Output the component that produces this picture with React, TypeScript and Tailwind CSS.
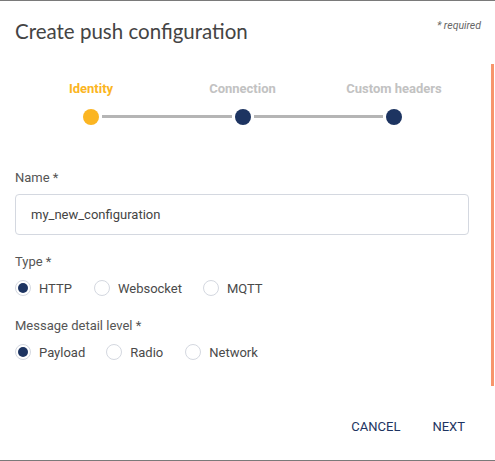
import React from "react"

function Radio({ label, checked }: { label: string; checked?: boolean }) {
  return (
    <label className="flex items-center">
      <span className="flex h-[16px] w-[16px] items-center justify-center rounded-full border border-[#d4d8e0] bg-white">
        {checked && <span className="h-[10px] w-[10px] rounded-full bg-[#1d3461]" />}
      </span>
      <span className="ml-[8px] text-[13px] text-[#4a4a4a]">{label}</span>
    </label>
  )
}

const steps = [
  { label: "Identity", active: true },
  { label: "Connection" },
  { label: "Custom headers" },
]

export default function App() {
  return (
    <div
      className="relative flex h-[461px] w-[495px] flex-col border-y border-[#7a7a7a] bg-white"
      style={{ fontFamily: "Roboto, 'Liberation Sans', sans-serif" }}
    >
      {/* scroll indicator */}
      <div className="absolute right-[1px] top-[63px] h-[322px] w-[3px] bg-[#f7956c]" />

      <div className="flex items-start justify-between pl-[15px] pr-[14px] pt-[17px]">
        <h1 className="text-[20.5px] leading-[26px] text-[#444]" style={{ fontFamily: "Lato, sans-serif" }}>
          Create push configuration
        </h1>
        <span className="text-[10.5px] italic text-[#666]">* required</span>
      </div>

      {/* stepper */}
      <div className="mt-[35px] flex pl-[83px] pr-[93px] text-[13px] font-bold">
        {steps.map((s, i) => (
          <React.Fragment key={s.label}>
            {i > 0 && <span className="flex-1" />}
            <span className="flex w-[16px] justify-center">
              <span className={`whitespace-nowrap ${s.active ? "text-[#fbb522]" : "text-[#c2c2c2]"}`}>{s.label}</span>
            </span>
          </React.Fragment>
        ))}
      </div>
      <div className="mt-[10px] flex items-center pl-[83px] pr-[93px]">
        <span className="h-[16px] w-[16px] rounded-full bg-[#fbb522]" />
        <span className="mx-[3px] h-[3px] flex-1 bg-[#b5b5b5]" />
        <span className="h-[16px] w-[16px] rounded-full bg-[#1d3461]" />
        <span className="mx-[3px] h-[3px] flex-1 bg-[#b5b5b5]" />
        <span className="h-[16px] w-[16px] rounded-full bg-[#1d3461]" />
      </div>

      <div className="flex flex-col px-[15px]">
        <div className="mt-[43px] text-[13px] text-[#555]">Name *</div>
        <div className="mt-[7px] flex h-[41px] w-[454px] items-center rounded-[4px] border border-[#d4d8e0] px-[15px] text-[13px] text-[#444]">
          my_new_configuration
        </div>

        <div className="mt-[17px] text-[13px] text-[#555]">Type *</div>
        <div className="mt-[7px] flex items-center">
          <Radio label="HTTP" checked />
          <span className="w-[22px]" />
          <Radio label="Websocket" />
          <span className="w-[21px]" />
          <Radio label="MQTT" />
        </div>

        <div className="mt-[18px] text-[13px] text-[#555]">Message detail level *</div>
        <div className="mt-[7px] flex items-center">
          <Radio label="Payload" checked />
          <span className="w-[21px]" />
          <Radio label="Radio" />
          <span className="w-[22px]" />
          <Radio label="Network" />
        </div>
      </div>

      <div className="mt-auto mb-[24px] flex justify-end gap-[32px] pr-[30px] text-[13px] text-[#1d3461]">
        <button className="uppercase">Cancel</button>
        <button className="uppercase">Next</button>
      </div>
    </div>
  )
}
